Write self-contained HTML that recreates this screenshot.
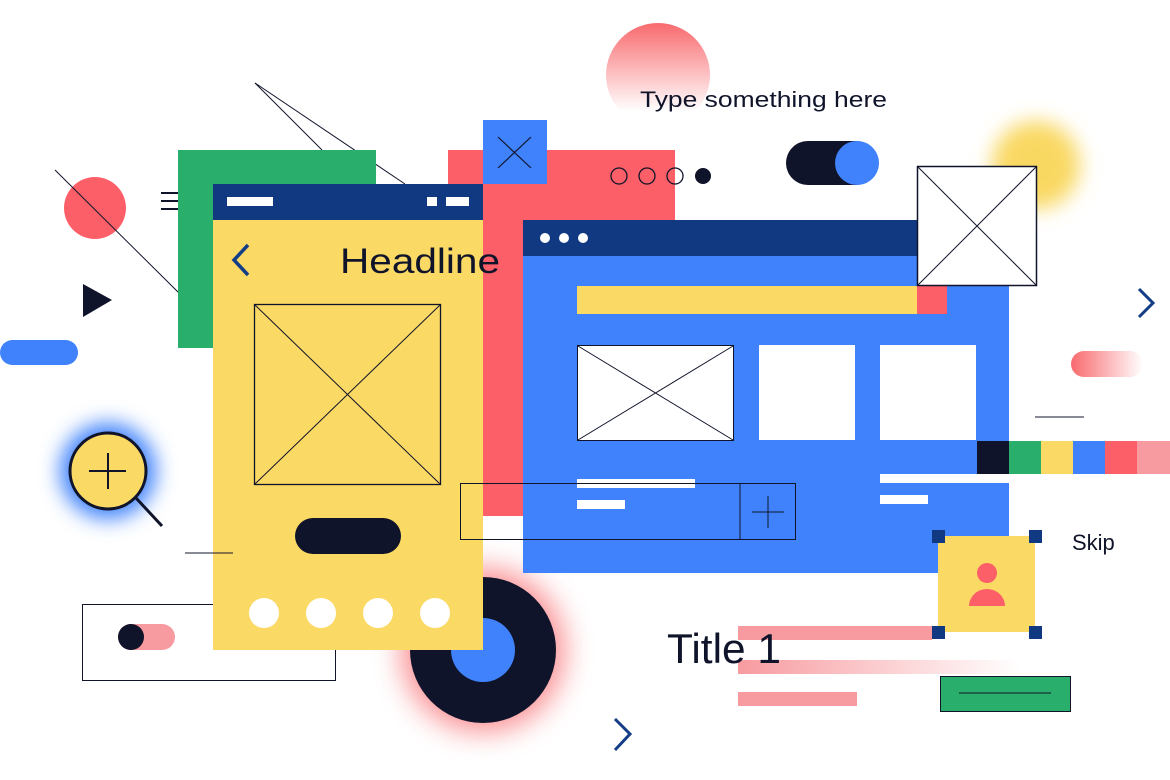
<!DOCTYPE html>
<html><head><meta charset="utf-8"><style>
html,body{margin:0;padding:0;background:#fff;width:1170px;height:780px;overflow:hidden}
svg{display:block}
text{font-family:"Liberation Sans",sans-serif}
</style></head><body>
<svg width="1170" height="780" viewBox="0 0 1170 780" xmlns="http://www.w3.org/2000/svg">
<defs>
<linearGradient id="pc" x1="0" y1="0" x2="0" y2="1"><stop offset="0" stop-color="#f86a6e"/><stop offset="0.85" stop-color="#f86a6e" stop-opacity="0"/></linearGradient>
<linearGradient id="ph" x1="0" y1="0" x2="1" y2="0"><stop offset="0" stop-color="#f86a6e"/><stop offset="1" stop-color="#f86a6e" stop-opacity="0"/></linearGradient>
<linearGradient id="pb" x1="0" y1="0" x2="1" y2="0"><stop offset="0" stop-color="#f79ba0"/><stop offset="1" stop-color="#f79ba0" stop-opacity="0"/></linearGradient>
<filter id="b8" x="-1" y="-1" width="3" height="3"><feGaussianBlur stdDeviation="10"/></filter>
<filter id="b12" x="-1" y="-1" width="3" height="3"><feGaussianBlur stdDeviation="14"/></filter>
</defs>
<circle cx="658" cy="75" r="52" fill="url(#pc)"/>
<circle cx="1036" cy="165" r="44" fill="#f9d862" filter="url(#b8)"/>
<circle cx="108" cy="471" r="48" fill="#3f82fb" filter="url(#b8)"/>
<circle cx="483" cy="650" r="82" fill="#f86a6e" opacity="0.75" filter="url(#b12)"/>
<circle cx="95" cy="208" r="31" fill="#fc5f68"/>
<line x1="55" y1="170" x2="180" y2="294" stroke="#10142a" stroke-width="1"/>
<g stroke="#10142a" stroke-width="2"><line x1="161" y1="193" x2="178" y2="193"/><line x1="161" y1="201" x2="178" y2="201"/><line x1="161" y1="209" x2="178" y2="209"/></g>
<path d="M83 284 L112 300 L83 317 Z" fill="#10142a"/>
<rect x="0" y="340" width="78" height="25" rx="12.5" fill="#3f82fb"/>
<line x1="255" y1="83" x2="322" y2="150" stroke="#10142a"/>
<line x1="255" y1="83" x2="405" y2="184" stroke="#10142a"/>
<rect x="178" y="150" width="198" height="198" fill="#29ae6b"/>
<rect x="448" y="150" width="227" height="366" fill="#fc5f68"/>
<rect x="483" y="120" width="64" height="64" fill="#3f82fb"/>
<path d="M498 137 L531 168 M531 137 L498 168" stroke="#10142a" stroke-width="1.2"/>
<text x="640" y="107" font-size="22" fill="#10142a" textLength="247" lengthAdjust="spacingAndGlyphs">Type something here</text>
<g fill="none" stroke="#10142a" stroke-width="1.3"><circle cx="619" cy="176" r="8"/><circle cx="647" cy="176" r="8"/><circle cx="675" cy="176" r="8"/></g>
<circle cx="703" cy="176" r="8" fill="#10142a"/>
<rect x="786" y="141" width="92" height="44" rx="22" fill="#10142a"/>
<circle cx="857" cy="163" r="22" fill="#3f82fb"/>
<rect x="523" y="220" width="486" height="353" fill="#3f82fb"/>
<rect x="523" y="220" width="400" height="36" fill="#103982"/>
<g fill="#fff"><circle cx="545" cy="238" r="5"/><circle cx="564" cy="238" r="5"/><circle cx="583" cy="238" r="5"/></g>
<rect x="577" y="286" width="341" height="28" fill="#fbd965"/>
<rect x="917" y="286" width="30" height="28" fill="#fc5f68"/>
<rect x="577.5" y="345.5" width="156" height="95" fill="#fff" stroke="#10142a"/>
<path d="M578 346 L733 440 M733 346 L578 440" stroke="#10142a"/>
<rect x="759" y="345" width="96" height="95" fill="#fff"/>
<rect x="880" y="345" width="96" height="95" fill="#fff"/>
<rect x="577" y="479" width="118" height="9" fill="#fff"/>
<rect x="577" y="500" width="48" height="9" fill="#fff"/>
<rect x="880" y="474" width="129" height="9" fill="#fff"/>
<rect x="880" y="495" width="48" height="9" fill="#fff"/>
<rect x="977" y="441" width="32" height="33" fill="#10142a"/>
<rect x="1009" y="441" width="32" height="33" fill="#29ae6b"/>
<rect x="1041" y="441" width="32" height="33" fill="#fbd965"/>
<rect x="1073" y="441" width="32" height="33" fill="#3f82fb"/>
<rect x="1105" y="441" width="32" height="33" fill="#fc5f68"/>
<rect x="1137" y="441" width="33" height="33" fill="#f79ba0"/>
<rect x="917.5" y="166.5" width="119" height="119" fill="#fff" stroke="#10142a" stroke-width="1.5"/>
<path d="M918 167 L1036 285 M1036 167 L918 285" stroke="#10142a"/>
<path d="M1139 289 L1153 303 L1139 317" fill="none" stroke="#133e87" stroke-width="3"/>
<rect x="1071" y="351" width="72" height="26" rx="13" fill="url(#ph)"/>
<line x1="1035" y1="417" x2="1084" y2="417" stroke="#10142a"/>
<circle cx="483" cy="650" r="73" fill="#10142a"/>
<circle cx="483" cy="650" r="32" fill="#3f82fb"/>
<rect x="213" y="184" width="270" height="466" fill="#fbd965"/>
<rect x="213" y="184" width="270" height="36" fill="#103982"/>
<rect x="227" y="197" width="46" height="9" fill="#fff"/>
<rect x="427" y="197" width="10" height="9" fill="#fff"/>
<rect x="446" y="197" width="23" height="9" fill="#fff"/>
<path d="M248 245 L234 260 L248 275" fill="none" stroke="#133e87" stroke-width="3.5"/>
<text x="340" y="273" font-size="35" fill="#10142a" textLength="160" lengthAdjust="spacingAndGlyphs">Headline</text>
<rect x="254.5" y="304.5" width="186" height="180" fill="none" stroke="#10142a" stroke-width="1.3"/>
<path d="M255 305 L440 484 M440 305 L255 484" stroke="#10142a"/>
<rect x="295" y="518" width="106" height="36" rx="18" fill="#10142a"/>
<g fill="#fff"><circle cx="264" cy="613" r="15"/><circle cx="321" cy="613" r="15"/><circle cx="378" cy="613" r="15"/><circle cx="435" cy="613" r="15"/></g>
<rect x="460.5" y="483.5" width="335" height="56" fill="none" stroke="#10142a"/>
<line x1="740" y1="483" x2="740" y2="540" stroke="#10142a"/>
<path d="M752 512 L784 512 M768 496 L768 528" stroke="#10142a"/>
<circle cx="108" cy="471" r="38" fill="#fbd965" stroke="#10142a" stroke-width="3"/>
<path d="M89 471 L126 471 M108 453 L108 489" stroke="#10142a" stroke-width="2"/>
<line x1="136" y1="498" x2="162" y2="526" stroke="#10142a" stroke-width="3"/>
<line x1="185" y1="553" x2="233" y2="553" stroke="#10142a"/>
<path d="M213 604.5 L82.5 604.5 L82.5 680.5 L335.5 680.5 L335.5 650" fill="none" stroke="#10142a"/>
<rect x="118" y="624" width="57" height="26" rx="13" fill="#f79ba0"/>
<circle cx="131" cy="637" r="13" fill="#10142a"/>
<rect x="938" y="536" width="97" height="96" fill="#fbd965"/>
<circle cx="987" cy="573" r="10" fill="#fc5f68"/>
<path d="M969 606 A18 17 0 0 1 1005 606 Z" fill="#fc5f68"/>
<g fill="#103982"><rect x="932" y="530" width="13" height="13"/><rect x="1029" y="530" width="13" height="13"/><rect x="932" y="626" width="13" height="13"/><rect x="1029" y="626" width="13" height="13"/></g>
<rect x="738" y="626" width="194" height="14" fill="#f79ba0"/>
<rect x="738" y="660" width="282" height="14" fill="url(#pb)"/>
<rect x="738" y="692" width="119" height="14" fill="#f79ba0"/>
<text x="667" y="663" font-size="42" fill="#10142a" textLength="114" lengthAdjust="spacingAndGlyphs">Title 1</text>
<text x="1072" y="550" font-size="22" fill="#10142a">Skip</text>
<rect x="940.5" y="676.5" width="130" height="35" fill="#29ae6b" stroke="#10142a"/>
<line x1="959" y1="693" x2="1051" y2="693" stroke="#10142a"/>
<path d="M615 719 L630 734 L615 750" fill="none" stroke="#133e87" stroke-width="3"/>
</svg>
</body></html>
